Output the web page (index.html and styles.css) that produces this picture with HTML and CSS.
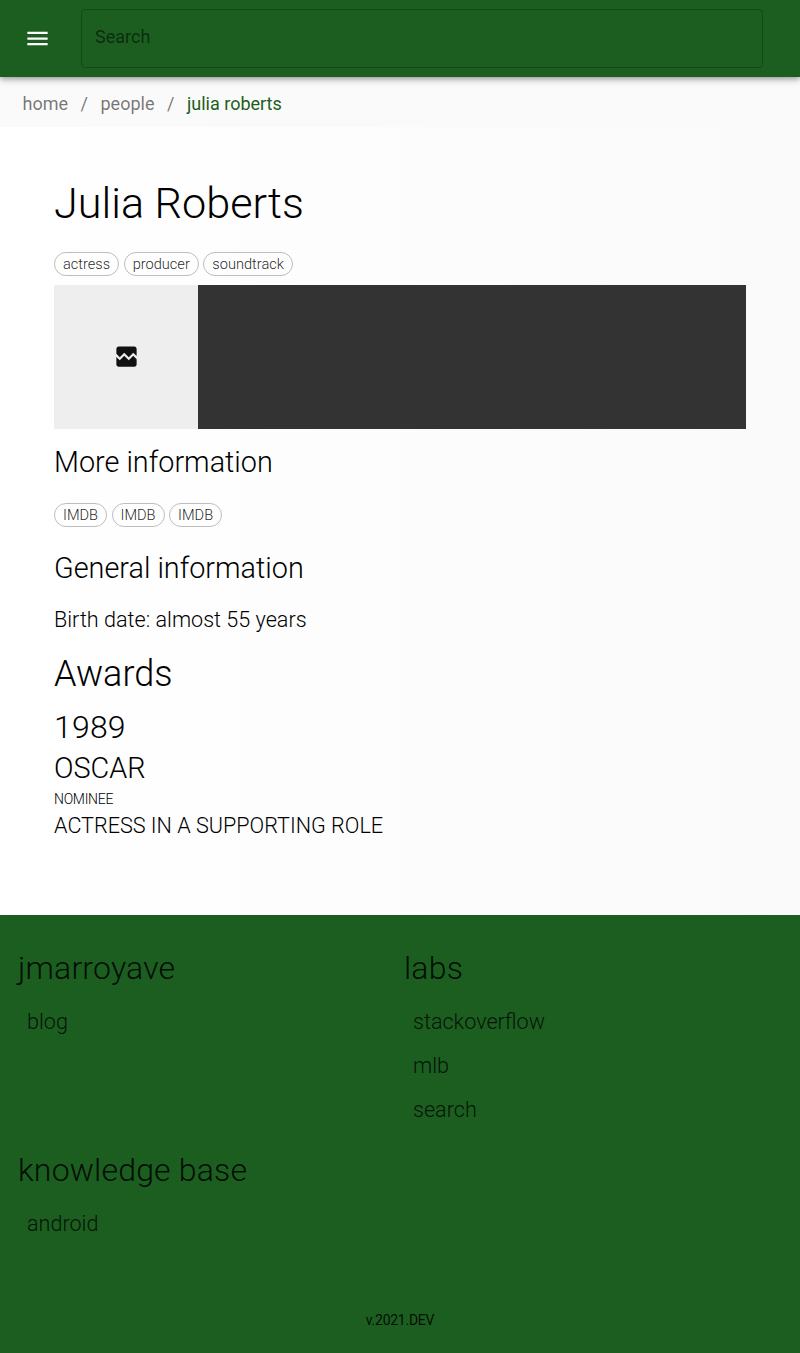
FILE: index.html
```html
<!DOCTYPE html>
<html lang="en">
<head>
<meta charset="utf-8">
<title>Julia Roberts</title>
<link rel="stylesheet" href="styles.css">
</head>
<body>
<header class="appbar">
  <button class="menu" aria-label="Menu"><svg viewBox="0 0 24 24"><path d="M3 18h18v-2H3v2zm0-5h18v-2H3v2zm0-7v2h18V6H3z"/></svg></button>
  <div class="search">Search</div>
</header>
<nav class="crumbs"><a>home</a><i>/</i><a>people</a><i>/</i><a class="current">julia roberts</a></nav>
<main class="content">
  <h1 class="name">Julia Roberts</h1>
  <div class="chips"><span class="chip">actress</span><span class="chip">producer</span><span class="chip">soundtrack</span></div>
  <div class="gallery"><div class="thumb"><svg viewBox="0 0 24 24"><path d="M21 5v6.590l-3-3.010-4 4.010-4-4-4 4-3-3.010V5c0-1.100.9-2 2-2h14c1.100 0 2 .9 2 2zm-3 6.420l3 3.010V19c0 1.100-.9 2-2 2H5c-1.100 0-2-.9-2-2v-6.580l3 2.990 4-4 4 4 4-3.990z"/></svg></div></div>
  <h2 class="section more">More information</h2>
  <div class="chips"><span class="chip">IMDB</span><span class="chip">IMDB</span><span class="chip">IMDB</span></div>
  <h2 class="section general">General information</h2>
  <p class="birth">Birth date: almost 55 years</p>
  <h2 class="awards">Awards</h2>
  <h3 class="year">1989</h3>
  <h4 class="award">OSCAR</h4>
  <div class="result">NOMINEE</div>
  <div class="role">ACTRESS IN A SUPPORTING ROLE</div>
</main>
<footer class="footer">
  <div class="groups">
    <section><h3 class="group">jmarroyave</h3><a class="link">blog</a></section>
    <section><h3 class="group">labs</h3><a class="link">stackoverflow</a><a class="link">mlb</a><a class="link">search</a></section>
    <section><h3 class="group">knowledge base</h3><a class="link">android</a></section>
  </div>
  <div class="version">v.2021.DEV</div>
</footer>
</body>
</html>
```
FILE: styles.css
```css
* { box-sizing: border-box; }
body { margin: 0; background: #fafafa; color: #000; font-family: Roboto, sans-serif; font-weight: 300; }
h1, h2, h3, h4, p { margin: 0; font-weight: 300; }
.appbar { position: relative; display: flex; align-items: center; height: 77px; padding: 0 37px 0 24px; background: #1b5e20; box-shadow: 0 2px 4px -1px rgba(0,0,0,.2), 0 4px 5px rgba(0,0,0,.14), 0 1px 10px rgba(0,0,0,.12); }
.menu { display: flex; width: 27px; height: 27px; margin-right: 30px; padding: 0; border: 0; background: none; }
.menu svg { width: 27px; height: 27px; fill: #fff; }
.search { flex: 1; height: 59px; padding: 0 13px 4px; border: 1px solid rgba(0,0,0,.23); border-radius: 4px; color: rgba(0,0,0,.54); font-size: 18px; font-weight: 400; line-height: 53px; }
.crumbs { display: flex; height: 50px; padding-left: 22.5px; background: #fafafa; color: rgba(0,0,0,.54); font-size: 18px; font-weight: 400; line-height: 54px; }
.crumbs i { width: 32.5px; font-style: normal; text-align: center; }
.crumbs .current { color: #1b5e20; }
.content { height: 788px; padding: 51px 54px 0; background: linear-gradient(90deg, #fff, #fafafa); }
.name { font-size: 43.2px; line-height: 52px; }
.chips { display: flex; gap: 4.5px; }
.name + .chips { margin-top: 22px; }
.chip { height: 24px; padding: 0 8px; border: 1px solid #bdbdbd; border-radius: 12px; color: rgba(0,0,0,.87); font-size: 14.6px; line-height: 22px; }
.gallery { height: 144px; margin-top: 9px; background: #333; }
.thumb { display: flex; align-items: center; justify-content: center; width: 144px; height: 144px; padding-bottom: 2px; background: #eee; }
.thumb svg { width: 27px; height: 27px; fill: #111; }
.section { font-size: 28.8px; line-height: 36px; }
.more { margin: 15px 0 23px; }
.general { margin: 23px 0 19px; }
.birth { font-size: 21.6px; line-height: 30px; }
.awards { margin-top: 18px; font-size: 36px; line-height: 42px; }
.year { margin-top: 13px; font-size: 32px; line-height: 38px; letter-spacing: .2px; }
.award { margin-top: 4px; font-size: 28.8px; line-height: 36px; }
.result { margin-top: 4px; font-size: 14px; line-height: 18px; letter-spacing: -.3px; }
.role { margin-top: 3px; font-size: 21.6px; line-height: 30px; }
.footer { height: 438px; padding: 34px 18px 0; background: #1b5e20; }
.groups { display: grid; grid-template-columns: 386px 1fr; grid-template-rows: 202px 161px; }
.group { margin-bottom: 13px; color: rgba(0,0,0,.87); font-size: 32px; line-height: 38px; letter-spacing: .18px; }
.link { display: block; padding-left: 9px; color: rgba(0,0,0,.8); font-size: 21.6px; line-height: 44px; }
.version { color: rgba(0,0,0,.87); font-size: 14px; font-weight: 400; line-height: 16px; letter-spacing: -.25px; text-align: center; }
```
